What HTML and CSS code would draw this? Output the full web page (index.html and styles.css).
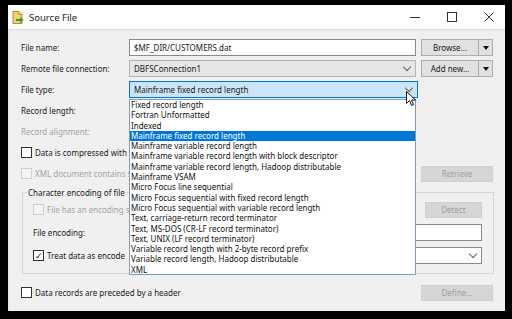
FILE: index.html
```html
<!DOCTYPE html>
<html lang="en">
<head>
  <meta charset="UTF-8" />
  <title>Source File</title>
  <link rel="stylesheet" href="styles.css">
</head>
<body>

<div class="window">
  <div class="titlebar">
    <svg class="app-icon" width="12" height="13" viewBox="0 0 12 13">
      <path d="M1 0.5 H7 L10 3.5 V12.5 H1 Z" fill="#f1d27a" stroke="#b88a2e" stroke-width="1"/>
      <path d="M7 0.5 V3.5 H10" fill="#fbe8b0" stroke="#b88a2e" stroke-width="1"/>
      <path d="M4 8 H8 V6 L11.5 9 L8 12 V10 H4 Z" fill="#3e9a35"/>
    </svg>
    <span class="title">Source File</span>
    <div class="controls">
      <svg width="10" height="10" viewBox="0 0 10 10"><path d="M0 5.5 H10" stroke="#333" stroke-width="1"/></svg>
      <svg width="10" height="10" viewBox="0 0 10 10"><rect x="0.5" y="0.5" width="9" height="9" fill="none" stroke="#333" stroke-width="1"/></svg>
      <svg width="10" height="10" viewBox="0 0 10 10"><path d="M0.5 0.5 L9.5 9.5 M9.5 0.5 L0.5 9.5" stroke="#333" stroke-width="1"/></svg>
    </div>
  </div>

  <div class="content">
    <div class="row">
      <span class="label">File name:</span>
      <div class="field input">$MF_DIR/CUSTOMERS.dat</div>
      <div class="split">
        <button class="btn">Browse...</button>
        <button class="btn arrow"><span class="tri"></span></button>
      </div>
    </div>

    <div class="row">
      <span class="label">Remote file connection:</span>
      <div class="field combo gray">DBFSConnection1<span class="chev"></span></div>
      <div class="split">
        <button class="btn">Add new...</button>
        <button class="btn arrow"><span class="tri"></span></button>
      </div>
    </div>

    <div class="row">
      <span class="label">File type:</span>
      <div class="field combo focus">Mainframe fixed record length<span class="chev"></span></div>
    </div>

    <div class="row">
      <span class="label">Record length:</span>
    </div>

    <div class="row">
      <span class="label disabled">Record alignment:</span>
    </div>

    <div class="row">
      <span class="check"></span>
      <span>Data is compressed with</span>
    </div>

    <div class="row">
      <span class="check off"></span>
      <span class="disabled">XML document contains s</span>
      <button class="btn wide off push">Retrieve</button>
    </div>

    <fieldset class="group">
      <legend>Character encoding of file</legend>
      <div class="row">
        <span class="check off"></span>
        <span class="disabled">File has an encoding s</span>
        <button class="btn wide off push">Detect</button>
      </div>
      <div class="row">
        <span class="label inner">File encoding:</span>
        <div class="field input grow"></div>
      </div>
      <div class="row">
        <span class="check on">&#10003;</span>
        <span class="treat">Treat data as encode</span>
        <div class="field combo grow"><span class="chev"></span></div>
      </div>
    </fieldset>

    <div class="row last">
      <span class="check"></span>
      <span>Data records are preceded by a header</span>
      <button class="btn wide off push">Define...</button>
    </div>
  </div>

  <ul class="list">
    <li>Fixed record length</li>
    <li>Fortran Unformatted</li>
    <li>Indexed</li>
    <li class="sel">Mainframe fixed record length</li>
    <li>Mainframe variable record length</li>
    <li>Mainframe variable record length with block descriptor</li>
    <li>Mainframe variable record length, Hadoop distributable</li>
    <li>Mainframe VSAM</li>
    <li>Micro Focus line sequential</li>
    <li>Micro Focus sequential with fixed record length</li>
    <li>Micro Focus sequential with variable record length</li>
    <li>Text, carriage-return record terminator</li>
    <li>Text, MS-DOS (CR-LF record terminator)</li>
    <li>Text, UNIX (LF record terminator)</li>
    <li>Variable record length with 2-byte record prefix</li>
    <li>Variable record length, Hadoop distributable</li>
    <li>XML</li>
  </ul>

  <svg class="cursor" width="10" height="16" viewBox="0 0 10 16">
    <path d="M0.5 0.5 V12.5 L3.5 9.5 L5.5 14.5 L7.5 13.5 L5.5 9 H9.5 Z" fill="#fff" stroke="#111" stroke-width="1"/>
  </svg>
</div>

</body>
</html>
```

FILE: styles.css
```css
body {
  margin: 0;
  background: #000;
  font-family: 'Noto Sans', sans-serif;
  font-size: 8px;
  color: #1a1a1a;
}
.window {
  position: relative;
  width: 497px;
  height: 306px;
  margin: 5px 0 0 8px;
  background: #f0f0f0;
  display: flex;
  flex-direction: column;
}
.titlebar {
  height: 24px;
  background: #fff;
  border-bottom: 1px solid #dcdcdc;
  display: flex;
  align-items: center;
  padding-left: 4px;
}
.app-icon {
  margin-top: 1px;
}
.title {
  margin-left: 5px;
  font-size: 9.5px;
  color: #222;
}
.controls {
  margin-left: auto;
  display: flex;
  gap: 27px;
  padding-right: 11px;
}
.content {
  flex: 1;
  padding: 7px 12px 0 11px;
  border-left: 2px solid #e6e6e6;
  display: flex;
  flex-direction: column;
}
.row {
  display: flex;
  align-items: center;
  height: 21px;
}
.label {
  width: 108px;
  flex-shrink: 0;
}
.label.inner {
  width: 96px;
}
.disabled {
  color: #a3a3a3;
}
.field {
  box-sizing: border-box;
  width: 289px;
  height: 17px;
  border: 1px solid #8a8a8a;
  background: #fff;
  padding: 0 4px;
  display: flex;
  align-items: center;
  position: relative;
}
.field.grow {
  width: auto;
  flex: 1;
}
.combo.gray {
  background: #e6e6e6;
  border-color: #b4b4b4;
}
.combo.focus {
  background: #cce4f7;
  border-color: #0078d7;
}
.chev {
  margin-left: auto;
  width: 5px;
  height: 5px;
  border-right: 1px solid #666;
  border-bottom: 1px solid #666;
  transform: rotate(45deg);
  margin-top: -4px;
  margin-right: 1px;
}
.split {
  display: flex;
  margin-left: 5px;
}
.btn {
  box-sizing: border-box;
  height: 17px;
  width: 58px;
  border: 1px solid #adadad;
  background: #e1e1e1;
  font-family: inherit;
  font-size: 8px;
  color: #1a1a1a;
  padding: 0;
}
.btn.arrow {
  width: 14px;
  border-left: none;
  display: flex;
  align-items: center;
  justify-content: center;
}
.tri {
  width: 0;
  height: 0;
  border-left: 3.5px solid transparent;
  border-right: 3.5px solid transparent;
  border-top: 4px solid #111;
}
.btn.wide {
  width: 72px;
  height: 16px;
}
.btn.off {
  background: #d6d6d6;
  border-color: #cfcfcf;
  color: #a0a0a0;
}
.push {
  margin-left: auto;
}
.check {
  box-sizing: border-box;
  width: 11px;
  height: 11px;
  border: 1px solid #333;
  background: #fff;
  margin-right: 3px;
  flex-shrink: 0;
  display: flex;
  align-items: center;
  justify-content: center;
  font-size: 9px;
  line-height: 1;
}
.check.off {
  border-color: #cfcfcf;
  background: #f4f4f4;
}
.group {
  margin: 3px 0 0 1px;
  width: 472px;
  box-sizing: border-box;
  border: 1px solid #d6d6d6;
  padding: 0 11px 6px 10px;
}
.group legend {
  padding: 0 1px;
  margin-left: -6px;
}
.group .row {
  height: 23px;
}
.group .btn.wide {
  width: 57px;
}
.treat {
  width: 84px;
  flex-shrink: 0;
}
.row.last {
  margin-top: 8px;
}
.list {
  position: absolute;
  left: 121px;
  top: 94px;
  width: 287px;
  height: 176px;
  box-sizing: border-box;
  margin: 0;
  padding: 0;
  list-style: none;
  background: #fff;
  border: 1px solid #7f9db9;
  font-size: 8px;
  line-height: 10.3px;
}
.list li {
  padding-left: 1px;
  white-space: nowrap;
  color: #111;
}
.list li.sel {
  background: #0078d7;
  color: #fff;
}
.cursor {
  position: absolute;
  left: 398px;
  top: 86px;
}
```
